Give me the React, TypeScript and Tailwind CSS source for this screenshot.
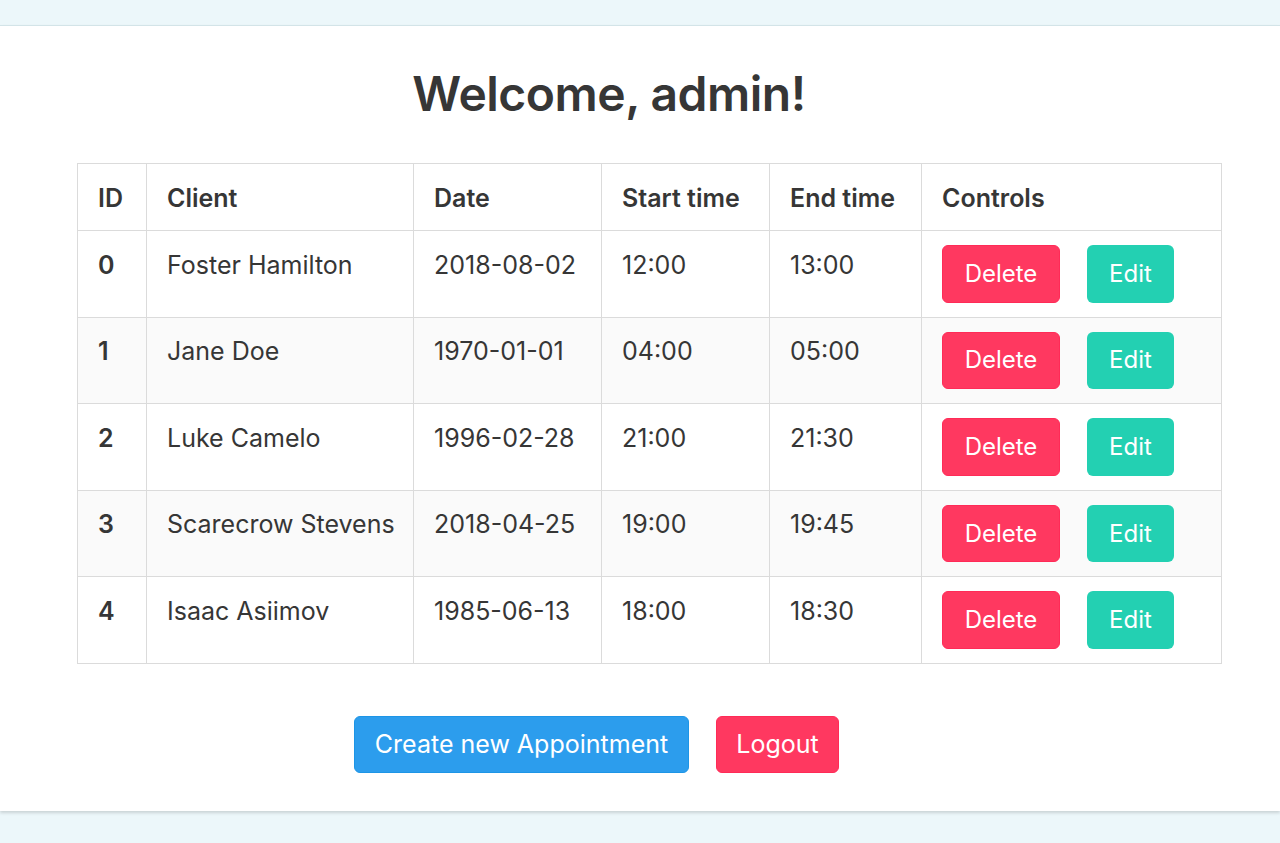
const rows = [
  { id: 0, client: "Foster Hamilton", date: "2018-08-02", start: "12:00", end: "13:00" },
  { id: 1, client: "Jane Doe", date: "1970-01-01", start: "04:00", end: "05:00" },
  { id: 2, client: "Luke Camelo", date: "1996-02-28", start: "21:00", end: "21:30" },
  { id: 3, client: "Scarecrow Stevens", date: "2018-04-25", start: "19:00", end: "19:45" },
  { id: 4, client: "Isaac Asiimov", date: "1985-06-13", start: "18:00", end: "18:30" },
]

const th = "border border-[#dbdbdb] px-[20px] pt-[16px] pb-[14px] text-left align-top font-semibold"
const td = "border border-[#dbdbdb] px-[20px] pt-[15.5px] pb-[12px] align-top"

export default function App() {
  return (
    <div
      className="min-h-[843px] bg-[#ecf7fa] pt-[25px] text-[#363636]"
      style={{ fontFamily: "Inter, 'Noto Sans', sans-serif" }}
    >
      <div className="border-t border-[#d3e4e8] bg-white pb-[38px] pt-[41px] shadow-[0_2px_3px_rgba(10,10,10,0.15)]">
        <h1 className="pr-[62px] text-center text-[48px] font-semibold leading-[54px] tracking-[-0.5px]">Welcome, admin!</h1>

        <table className="mt-[42px] ml-[77px] w-[1144px] table-fixed border-collapse text-[25px] leading-[36px]">
          <colgroup>
            <col className="w-[69px]" />
            <col className="w-[267px]" />
            <col className="w-[188px]" />
            <col className="w-[168px]" />
            <col className="w-[152px]" />
            <col className="w-[300px]" />
          </colgroup>
          <thead>
            <tr>
              <th className={th}>ID</th>
              <th className={th}>Client</th>
              <th className={th}>Date</th>
              <th className={th}>Start time</th>
              <th className={th}>End time</th>
              <th className={th}>Controls</th>
            </tr>
          </thead>
          <tbody>
            {rows.map((r, i) => (
              <tr key={r.id} className={i % 2 === 1 ? "bg-[#fafafa]" : "bg-white"}>
                <td className={td + " font-semibold"}>{r.id}</td>
                <td className={td + " whitespace-nowrap"}>{r.client}</td>
                <td className={td}>{r.date}</td>
                <td className={td}>{r.start}</td>
                <td className={td}>{r.end}</td>
                <td className="border border-[#dbdbdb] px-[20px] py-[14px] align-top">
                  <div className="flex gap-[27px]">
                    <button className="h-[57.6px] w-[118px] rounded-[6px] border border-[#ff2b57] bg-[#ff3860] text-[24px] text-white">
                      Delete
                    </button>
                    <button className="h-[57.6px] w-[87px] rounded-[6px] bg-[#23d0b2] text-[24px] text-white">Edit</button>
                  </div>
                </td>
              </tr>
            ))}
          </tbody>
        </table>

        <div className="mt-[52px] flex gap-[27px] pl-[354px] text-[25px]">
          <button className="h-[57px] w-[335px] rounded-[6px] border border-[#1d95e6] bg-[#2c9ded] text-white">
            Create new Appointment
          </button>
          <button className="h-[57px] w-[123px] rounded-[6px] border border-[#ff2b57] bg-[#ff3860] text-white">
            Logout
          </button>
        </div>
      </div>
    </div>
  )
}
